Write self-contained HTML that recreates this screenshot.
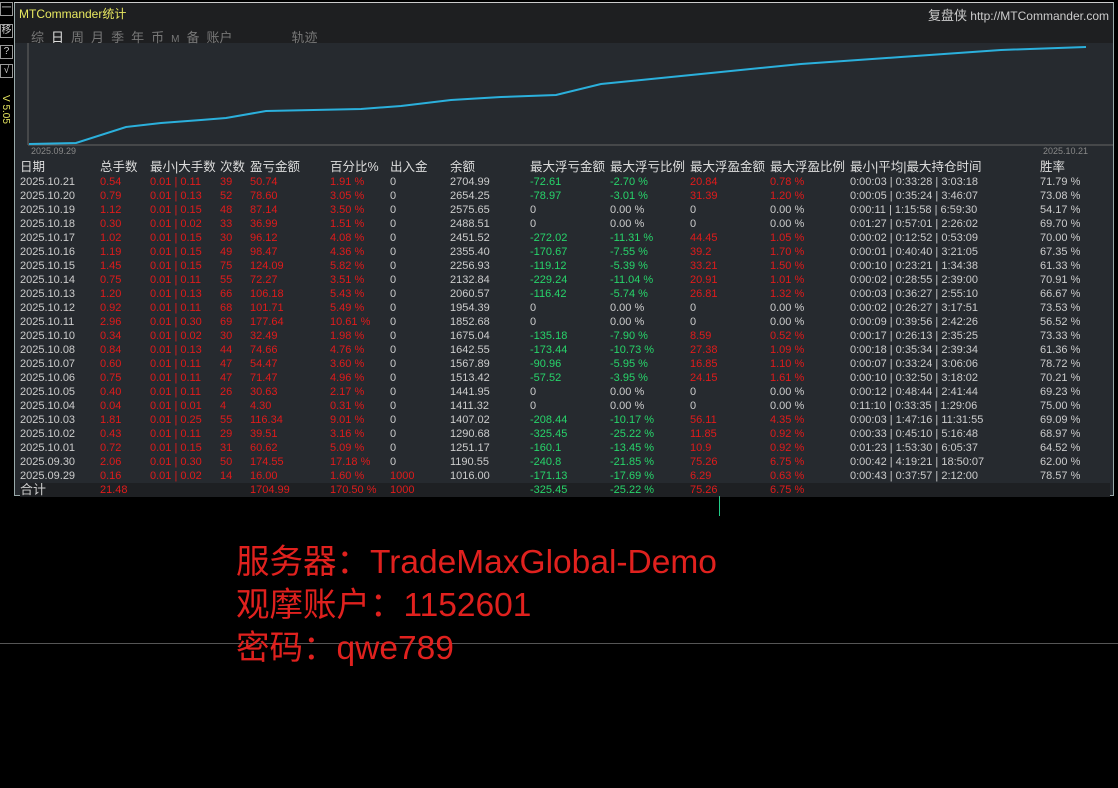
<!DOCTYPE html>
<html><head><meta charset="utf-8"><style>
*{margin:0;padding:0;box-sizing:border-box}
body{width:1118px;height:788px;background:#000;position:relative;overflow:hidden;font-family:"Liberation Sans","Noto Sans CJK SC",sans-serif}
#panel{position:absolute;left:14px;top:2px;width:1100px;height:494px;background:#262a2f;border:1px solid #9aa;border-top:1px solid #ccc}
#hdr{position:absolute;left:0;top:0;width:100%;height:40px;background:#1e1f21}
.title{position:absolute;left:4px;top:2px;color:#e8e860;font-size:12px}
.site{position:absolute;right:4px;top:2px;color:#ccc;font-size:12px}
.site span{font-size:13px}
.tabs{position:absolute;left:16px;top:24px;font-size:13px;color:#777}
.tabs span{margin-right:7px}
#left{position:absolute;left:0;top:0;width:14px;height:500px;background:#000}
.lb{position:absolute;left:0;width:13px;height:14px;border:1px solid #999;color:#ccc;font-size:10px;text-align:center;line-height:12px}
table{position:absolute;left:5px;top:156px;border-collapse:collapse;table-layout:fixed;font-size:11px;color:#ccc}
td{height:14px;line-height:14px;white-space:nowrap;overflow:hidden;padding:0}
tr.h td{font-size:12.5px;height:16px;line-height:16px;color:#ddd}
.r{color:#e01b1b}.g{color:#27d46a}
tr.t td{background:#1e2023}
.big{position:absolute;left:236px;color:#e0211e;font-size:33.5px;line-height:43px;font-family:"Liberation Sans","Noto Sans CJK SC",sans-serif}
</style></head><body>
<div id="panel">
<div id="hdr"><div class="title">MTCommander统计</div><div class="site"><span>复盘侠</span> http://MTCommander.com</div>
<div class="tabs"><span>综</span><span style="color:#ddd">日</span><span>周</span><span>月</span><span>季</span><span>年</span><span>币</span><span style="font-size:10px">M</span><span>备</span><span>账户</span><span style="margin-left:52px">轨迹</span></div></div>
<svg style="position:absolute;left:0;top:40px" width="1100" height="115">
<line x1="13" y1="0" x2="13" y2="102" stroke="#666"/>
<line x1="13" y1="102" x2="1098" y2="102" stroke="#666"/>
<polyline fill="none" stroke="#2bb0dc" stroke-width="2" points="14,101 61,100 111,84 146,80 186,77 211,75 251,68 346,66 386,63 436,57 486,54 541,52 586,41 686,31 786,21 886,14 986,7 1071,4"/>
<text x="16" y="111" fill="#888" font-size="9" font-family="Liberation Sans">2025.09.29</text>
<text x="1028" y="111" fill="#888" font-size="9" font-family="Liberation Sans">2025.10.21</text>
</svg>
<table>
<colgroup><col style="width:80px"><col style="width:50px"><col style="width:70px"><col style="width:30px"><col style="width:80px"><col style="width:60px"><col style="width:60px"><col style="width:80px"><col style="width:80px"><col style="width:80px"><col style="width:80px"><col style="width:80px"><col style="width:190px"><col style="width:70px"></colgroup>
<tr class="h"><td>日期</td><td>总手数</td><td>最小|大手数</td><td>次数</td><td>盈亏金额</td><td>百分比%</td><td>出入金</td><td>余额</td><td>最大浮亏金额</td><td>最大浮亏比例</td><td>最大浮盈金额</td><td>最大浮盈比例</td><td>最小|平均|最大持仓时间</td><td>胜率</td></tr>
<tr><td>2025.10.21</td><td class="r">0.54</td><td class="r">0.01 | 0.11</td><td class="r">39</td><td class="r">50.74</td><td class="r">1.91 %</td><td>0</td><td>2704.99</td><td class="g">-72.61</td><td class="g">-2.70 %</td><td class="r">20.84</td><td class="r">0.78 %</td><td>0:00:03 | 0:33:28 | 3:03:18</td><td>71.79 %</td></tr>
<tr><td>2025.10.20</td><td class="r">0.79</td><td class="r">0.01 | 0.13</td><td class="r">52</td><td class="r">78.60</td><td class="r">3.05 %</td><td>0</td><td>2654.25</td><td class="g">-78.97</td><td class="g">-3.01 %</td><td class="r">31.39</td><td class="r">1.20 %</td><td>0:00:05 | 0:35:24 | 3:46:07</td><td>73.08 %</td></tr>
<tr><td>2025.10.19</td><td class="r">1.12</td><td class="r">0.01 | 0.15</td><td class="r">48</td><td class="r">87.14</td><td class="r">3.50 %</td><td>0</td><td>2575.65</td><td>0</td><td>0.00 %</td><td>0</td><td>0.00 %</td><td>0:00:11 | 1:15:58 | 6:59:30</td><td>54.17 %</td></tr>
<tr><td>2025.10.18</td><td class="r">0.30</td><td class="r">0.01 | 0.02</td><td class="r">33</td><td class="r">36.99</td><td class="r">1.51 %</td><td>0</td><td>2488.51</td><td>0</td><td>0.00 %</td><td>0</td><td>0.00 %</td><td>0:01:27 | 0:57:01 | 2:26:02</td><td>69.70 %</td></tr>
<tr><td>2025.10.17</td><td class="r">1.02</td><td class="r">0.01 | 0.15</td><td class="r">30</td><td class="r">96.12</td><td class="r">4.08 %</td><td>0</td><td>2451.52</td><td class="g">-272.02</td><td class="g">-11.31 %</td><td class="r">44.45</td><td class="r">1.05 %</td><td>0:00:02 | 0:12:52 | 0:53:09</td><td>70.00 %</td></tr>
<tr><td>2025.10.16</td><td class="r">1.19</td><td class="r">0.01 | 0.15</td><td class="r">49</td><td class="r">98.47</td><td class="r">4.36 %</td><td>0</td><td>2355.40</td><td class="g">-170.67</td><td class="g">-7.55 %</td><td class="r">39.2</td><td class="r">1.70 %</td><td>0:00:01 | 0:40:40 | 3:21:05</td><td>67.35 %</td></tr>
<tr><td>2025.10.15</td><td class="r">1.45</td><td class="r">0.01 | 0.15</td><td class="r">75</td><td class="r">124.09</td><td class="r">5.82 %</td><td>0</td><td>2256.93</td><td class="g">-119.12</td><td class="g">-5.39 %</td><td class="r">33.21</td><td class="r">1.50 %</td><td>0:00:10 | 0:23:21 | 1:34:38</td><td>61.33 %</td></tr>
<tr><td>2025.10.14</td><td class="r">0.75</td><td class="r">0.01 | 0.11</td><td class="r">55</td><td class="r">72.27</td><td class="r">3.51 %</td><td>0</td><td>2132.84</td><td class="g">-229.24</td><td class="g">-11.04 %</td><td class="r">20.91</td><td class="r">1.01 %</td><td>0:00:02 | 0:28:55 | 2:39:00</td><td>70.91 %</td></tr>
<tr><td>2025.10.13</td><td class="r">1.20</td><td class="r">0.01 | 0.13</td><td class="r">66</td><td class="r">106.18</td><td class="r">5.43 %</td><td>0</td><td>2060.57</td><td class="g">-116.42</td><td class="g">-5.74 %</td><td class="r">26.81</td><td class="r">1.32 %</td><td>0:00:03 | 0:36:27 | 2:55:10</td><td>66.67 %</td></tr>
<tr><td>2025.10.12</td><td class="r">0.92</td><td class="r">0.01 | 0.11</td><td class="r">68</td><td class="r">101.71</td><td class="r">5.49 %</td><td>0</td><td>1954.39</td><td>0</td><td>0.00 %</td><td>0</td><td>0.00 %</td><td>0:00:02 | 0:26:27 | 3:17:51</td><td>73.53 %</td></tr>
<tr><td>2025.10.11</td><td class="r">2.96</td><td class="r">0.01 | 0.30</td><td class="r">69</td><td class="r">177.64</td><td class="r">10.61 %</td><td>0</td><td>1852.68</td><td>0</td><td>0.00 %</td><td>0</td><td>0.00 %</td><td>0:00:09 | 0:39:56 | 2:42:26</td><td>56.52 %</td></tr>
<tr><td>2025.10.10</td><td class="r">0.34</td><td class="r">0.01 | 0.02</td><td class="r">30</td><td class="r">32.49</td><td class="r">1.98 %</td><td>0</td><td>1675.04</td><td class="g">-135.18</td><td class="g">-7.90 %</td><td class="r">8.59</td><td class="r">0.52 %</td><td>0:00:17 | 0:26:13 | 2:35:25</td><td>73.33 %</td></tr>
<tr><td>2025.10.08</td><td class="r">0.84</td><td class="r">0.01 | 0.13</td><td class="r">44</td><td class="r">74.66</td><td class="r">4.76 %</td><td>0</td><td>1642.55</td><td class="g">-173.44</td><td class="g">-10.73 %</td><td class="r">27.38</td><td class="r">1.09 %</td><td>0:00:18 | 0:35:34 | 2:39:34</td><td>61.36 %</td></tr>
<tr><td>2025.10.07</td><td class="r">0.60</td><td class="r">0.01 | 0.11</td><td class="r">47</td><td class="r">54.47</td><td class="r">3.60 %</td><td>0</td><td>1567.89</td><td class="g">-90.96</td><td class="g">-5.95 %</td><td class="r">16.85</td><td class="r">1.10 %</td><td>0:00:07 | 0:33:24 | 3:06:06</td><td>78.72 %</td></tr>
<tr><td>2025.10.06</td><td class="r">0.75</td><td class="r">0.01 | 0.11</td><td class="r">47</td><td class="r">71.47</td><td class="r">4.96 %</td><td>0</td><td>1513.42</td><td class="g">-57.52</td><td class="g">-3.95 %</td><td class="r">24.15</td><td class="r">1.61 %</td><td>0:00:10 | 0:32:50 | 3:18:02</td><td>70.21 %</td></tr>
<tr><td>2025.10.05</td><td class="r">0.40</td><td class="r">0.01 | 0.11</td><td class="r">26</td><td class="r">30.63</td><td class="r">2.17 %</td><td>0</td><td>1441.95</td><td>0</td><td>0.00 %</td><td>0</td><td>0.00 %</td><td>0:00:12 | 0:48:44 | 2:41:44</td><td>69.23 %</td></tr>
<tr><td>2025.10.04</td><td class="r">0.04</td><td class="r">0.01 | 0.01</td><td class="r">4</td><td class="r">4.30</td><td class="r">0.31 %</td><td>0</td><td>1411.32</td><td>0</td><td>0.00 %</td><td>0</td><td>0.00 %</td><td>0:11:10 | 0:33:35 | 1:29:06</td><td>75.00 %</td></tr>
<tr><td>2025.10.03</td><td class="r">1.81</td><td class="r">0.01 | 0.25</td><td class="r">55</td><td class="r">116.34</td><td class="r">9.01 %</td><td>0</td><td>1407.02</td><td class="g">-208.44</td><td class="g">-10.17 %</td><td class="r">56.11</td><td class="r">4.35 %</td><td>0:00:03 | 1:47:16 | 11:31:55</td><td>69.09 %</td></tr>
<tr><td>2025.10.02</td><td class="r">0.43</td><td class="r">0.01 | 0.11</td><td class="r">29</td><td class="r">39.51</td><td class="r">3.16 %</td><td>0</td><td>1290.68</td><td class="g">-325.45</td><td class="g">-25.22 %</td><td class="r">11.85</td><td class="r">0.92 %</td><td>0:00:33 | 0:45:10 | 5:16:48</td><td>68.97 %</td></tr>
<tr><td>2025.10.01</td><td class="r">0.72</td><td class="r">0.01 | 0.15</td><td class="r">31</td><td class="r">60.62</td><td class="r">5.09 %</td><td>0</td><td>1251.17</td><td class="g">-160.1</td><td class="g">-13.45 %</td><td class="r">10.9</td><td class="r">0.92 %</td><td>0:01:23 | 1:53:30 | 6:05:37</td><td>64.52 %</td></tr>
<tr><td>2025.09.30</td><td class="r">2.06</td><td class="r">0.01 | 0.30</td><td class="r">50</td><td class="r">174.55</td><td class="r">17.18 %</td><td>0</td><td>1190.55</td><td class="g">-240.8</td><td class="g">-21.85 %</td><td class="r">75.26</td><td class="r">6.75 %</td><td>0:00:42 | 4:19:21 | 18:50:07</td><td>62.00 %</td></tr>
<tr><td>2025.09.29</td><td class="r">0.16</td><td class="r">0.01 | 0.02</td><td class="r">14</td><td class="r">16.00</td><td class="r">1.60 %</td><td class="r">1000</td><td>1016.00</td><td class="g">-171.13</td><td class="g">-17.69 %</td><td class="r">6.29</td><td class="r">0.63 %</td><td>0:00:43 | 0:37:57 | 2:12:00</td><td>78.57 %</td></tr>
<tr class="t"><td style="font-size:13px">合计</td><td class="r">21.48</td><td></td><td></td><td class="r">1704.99</td><td class="r">170.50 %</td><td class="r">1000</td><td></td><td class="g">-325.45</td><td class="g">-25.22 %</td><td class="r">75.26</td><td class="r">6.75 %</td><td></td><td></td></tr>
</table>
</div>
<div id="left">
<div class="lb" style="top:2px">一</div>
<div class="lb" style="top:24px">移</div>
<div class="lb" style="top:45px">?</div>
<div class="lb" style="top:64px">√</div>
<div style="position:absolute;left:0;top:95px;color:#e8e860;font-size:10px;writing-mode:vertical-rl">V 5.05</div>
</div>
<div style="position:absolute;left:719px;top:496px;width:1px;height:20px;background:#2c8"></div>
<div style="position:absolute;left:0;top:643px;width:1118px;height:1px;background:#555"></div>
<div class="big" style="top:541px">服务器：TradeMaxGlobal-Demo</div>
<div class="big" style="top:584px">观摩账户：1152601</div>
<div class="big" style="top:627px">密码：qwe789</div>
</body></html>
